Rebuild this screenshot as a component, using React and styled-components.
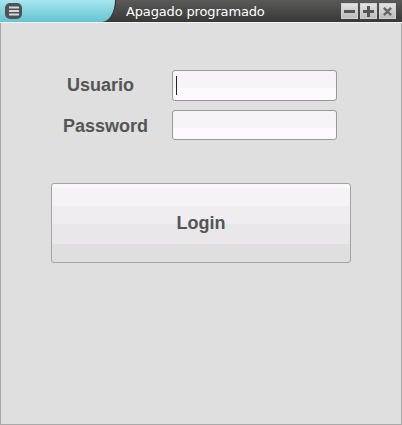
import React, {useState} from 'react'
import styled, {createGlobalStyle} from 'styled-components'

const GlobalStyle = createGlobalStyle`
  html, body {
    margin: 0;
    padding: 0;
    background: #dfdfdf;
  }
  * { box-sizing: border-box; }
`

const Window = styled.div`
  width: 402px;
  height: 425px;
  display: flex;
  flex-direction: column;
  background: #dfdfdf;
  border: 1px solid #a9a9a9;
  border-top: none;
`

const TitleBar = styled.div`
  height: 23px;
  display: flex;
  align-items: center;
  background: linear-gradient(#5a5a58, #383836);
  border-bottom: 1px solid #f2f2f2;
  margin: 0 -1px;
`

const MenuTab = styled.div`
  width: 116px;
  height: 100%;
  display: flex;
  align-items: center;
  padding-left: 5px;
  background: linear-gradient(#a6e6ee, #66c4d3);
  border-bottom-right-radius: 14px 22px;
  border-right: 1px solid #2a2a2a;
`

const MenuButton = styled.div`
  width: 17px;
  height: 16px;
  border-radius: 5px;
  background: #4e5456;
  display: flex;
  align-items: center;
  justify-content: center;
`

const Title = styled.div`
  flex: 1;
  padding-left: 10px;
  color: #ffffff;
  font-family: "DejaVu Sans", sans-serif;
  font-size: 13px;
  letter-spacing: -0.15px;
`

const Controls = styled.div`
  display: flex;
  gap: 2px;
  padding-right: 6px;
`

const CtrlButton = styled.div`
  width: 17px;
  height: 16px;
  border: 1px solid #d0d0d0;
  background: linear-gradient(#e2e2e2, #bcbcbc);
  display: flex;
  align-items: center;
  justify-content: center;
`

const Body = styled.div`
  flex: 1;
  display: flex;
  flex-direction: column;
  padding-top: 47px;
`

const Form = styled.div`
  display: grid;
  grid-template-columns: 171px 165px;
  row-gap: 9px;
  align-items: center;
`

const Label = styled.div`
  font-family: "Liberation Sans", Arial, sans-serif;
  font-weight: bold;
  font-size: 18px;
  color: #555555;
  padding-left: ${(props) => props.left}px;
  margin-top: ${(props) => props.top || 0}px;
`

const FieldBox = styled.div`
  position: relative;
  width: 165px;
`

const Caret = styled.span`
  position: absolute;
  left: 4px;
  top: 6px;
  width: 1px;
  height: 19px;
  background: #222;
`

const Field = styled.input`
  display: block;
  width: 165px;
  height: ${(props) => props.h || 31}px;
  border: 1px solid #9a9a9a;
  border-radius: 3px;
  background: linear-gradient(#f6f4f6 0%, #f6f4f6 60%, #fcf9fc 60%, #fdfafd 100%);
  padding: 0 4px;
  font-size: 13px;
  font-family: "DejaVu Sans", sans-serif;
  outline: none;
  caret-color: transparent;
`

const LoginButton = styled.button`
  margin: 43px 0 0 50px;
  width: 300px;
  height: 80px;
  border: 1px solid #a4a4a4;
  border-radius: 3px;
  background: linear-gradient(
    #f8f8f8 0px, #f8f8f8 4px,
    #f5f3f5 4px, #f5f3f5 22px,
    #efedef 22px, #efedef 40px,
    #e9e7e9 40px, #e9e7e9 60px,
    #e0dfe0 60px, #e0dfe0 100%
  );
  font-family: "Liberation Sans", Arial, sans-serif;
  font-weight: bold;
  font-size: 18px;
  color: #555555;
  padding: 0;
`

const App = () => {
  const [user, setUser] = useState("")
  const [pass, setPass] = useState("")

  return (
    <Window>
      <GlobalStyle />
      <TitleBar>
        <MenuTab>
          <MenuButton>
            <svg width="10" height="10" viewBox="0 0 10 10">
              <rect x="0" y="0.5" width="10" height="2" fill="#d8d8d8" />
              <rect x="0" y="4" width="10" height="2" fill="#d8d8d8" />
              <rect x="0" y="7.5" width="10" height="2" fill="#d8d8d8" />
            </svg>
          </MenuButton>
        </MenuTab>
        <Title>Apagado programado</Title>
        <Controls>
          <CtrlButton>
            <svg width="11" height="11" viewBox="0 0 11 11">
              <rect x="0" y="4" width="11" height="3" fill="#555" />
            </svg>
          </CtrlButton>
          <CtrlButton>
            <svg width="11" height="11" viewBox="0 0 11 11">
              <rect x="0" y="4" width="11" height="3" fill="#555" />
              <rect x="4" y="0" width="3" height="11" fill="#555" />
            </svg>
          </CtrlButton>
          <CtrlButton>
            <svg width="9" height="9" viewBox="0 0 10 10">
              <path d="M1 1 L9 9 M9 1 L1 9" stroke="#666" strokeWidth="2.6" />
            </svg>
          </CtrlButton>
        </Controls>
      </TitleBar>
      <Body>
        <Form>
          <Label left={66} top={-1}>Usuario</Label>
          <FieldBox>
            <Field value={user} onChange={(e) => setUser(e.target.value)} />
            {user === "" && <Caret />}
          </FieldBox>
          <Label left={62} top={2}>Password</Label>
          <FieldBox>
            <Field type="password" h={30} value={pass} onChange={(e) => setPass(e.target.value)} />
          </FieldBox>
        </Form>
        <LoginButton>Login</LoginButton>
      </Body>
    </Window>
  )
}

export default App
